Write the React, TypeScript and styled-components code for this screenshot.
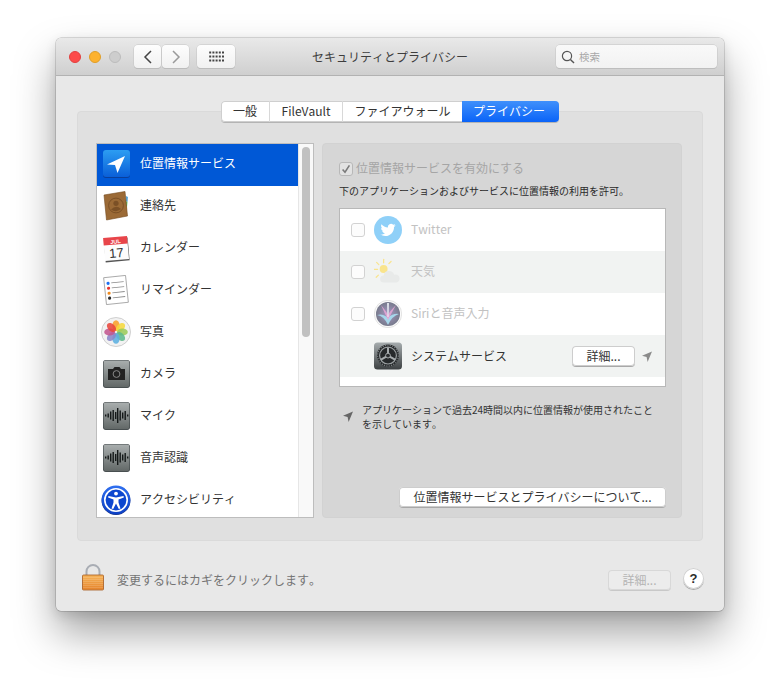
import React from "react";
import styled, { createGlobalStyle } from "styled-components";

const Global = createGlobalStyle`
  html, body { margin: 0; padding: 0; background: #fff; }
  body { width: 780px; height: 685px; overflow: hidden; font-family: "Noto Sans CJK JP", "Liberation Sans", sans-serif; font-size: 12px; color: #2e2e2e; font-kerning: none; }
  #root { padding: 38px 56px 0; }
`;

const Window = styled.div`
  width: 668px; height: 573px; box-sizing: border-box; display: flex; flex-direction: column;
  background: #e8e8e8; border-radius: 5px;
  box-shadow: 0 0 0 .5px rgba(0,0,0,.25), 0 22px 42px rgba(0,0,0,.36), 0 4px 12px rgba(0,0,0,.12);
`;
const TitleBar = styled.header`
  position: relative; height: 38px; box-sizing: border-box; flex: none;
  display: flex; align-items: center; padding: 0 7px 0 13px;
  background: linear-gradient(#e9e9e9, #cfcfcf); border-bottom: 1px solid #b2b2b2; border-radius: 5px 5px 0 0;
`;
const Light = styled.span<{ $c: string; $b: string }>`
  width: 12px; height: 12px; border-radius: 50%; margin-right: 8px; flex: none; box-sizing: border-box;
  background: ${p => p.$c}; border: .5px solid ${p => p.$b};
`;
const ToolBtn = styled.button<{ $w: number; $dim?: boolean }>`
  width: ${p => p.$w}px; height: 23px; padding: 0; flex: none; display: flex; align-items: center; justify-content: center;
  background: linear-gradient(#fdfdfd, #f1f1f1); border: none; border-radius: 4px;
  box-shadow: 0 0 0 .5px #c4c4c4, 0 1px 0 #b4b4b4; color: ${p => (p.$dim ? "#9a9a9a" : "#444")};
`;
const NavGroup = styled.div`display: flex; gap: 1px; margin: 0 8px 0 5px;`;
const Title = styled.div`
  position: absolute; left: 0; right: 0; top: 9px; text-align: center; font-size: 12px; line-height: 20px; color: #3d3d3d; pointer-events: none;
`;
const Search = styled.div`
  margin-left: auto; width: 161px; height: 23px; box-sizing: border-box; display: flex; align-items: center; gap: 4px; padding-left: 5px;
  background: linear-gradient(#f9f9f9, #f2f2f2); border-radius: 4px; box-shadow: 0 0 0 .5px #c4c4c4, 0 1px 0 #b8b8b8;
  font-size: 10.5px; color: #a8a8a8;
`;
const Body = styled.main`flex: 1; display: flex; flex-direction: column; padding: 25px 21px 0; min-height: 0;`;
const Tabs = styled.nav`
  position: relative; z-index: 1; align-self: center; display: flex; height: 21px; margin-bottom: -11px;
  background: #fff; border-radius: 4px; box-shadow: inset 0 0 0 1px #cfcfcf, 0 1px 0 #b4b4b4;
`;
const Tab = styled.div<{ $w: number; $on?: boolean; $sep?: boolean }>`
  width: ${p => p.$w}px; box-sizing: border-box; text-align: center; line-height: 20px; font-size: 12px;
  color: ${p => (p.$on ? "#fff" : "#333")};
  background: ${p => (p.$on ? "linear-gradient(#3f90fb, #0a63f8)" : "transparent")};
  border-radius: ${p => (p.$on ? "0 4px 4px 0" : "0")};
  border-right: ${p => (p.$sep ? "1px solid #d8d8d8" : "none")};
  padding-right: ${p => (p.$on ? "3px" : "0")};
`;
const Panel = styled.section`
  height: 430px; box-sizing: border-box; flex: none; display: flex; gap: 9px; padding: 31px 20px 22px 18px;
  background: #e0e0e0; border: 1px solid #dadada; border-radius: 4px;
`;
const ListBox = styled.div`
  width: 218px; flex: none; box-sizing: border-box; display: flex; background: #fff; border: 1px solid #bdbdbd; overflow: hidden;
`;
const List = styled.ul`flex: 1; margin: 0; padding: 0; list-style: none; min-width: 0;`;
const ListRow = styled.li<{ $on?: boolean }>`
  height: 42px; display: flex; align-items: center; gap: 9px; padding-left: 4px;
  font-size: 12px; line-height: 16px; padding-bottom: 3px; box-sizing: border-box;
  background: ${p => (p.$on ? "#0058d6" : "transparent")}; color: ${p => (p.$on ? "#fff" : "#333")};
`;
const RowLabel = styled.span`padding-bottom: 2px;`;
const IconSlot = styled.span`width: 30px; height: 30px; flex: none; display: block; svg { display: block; }`;
const Track = styled.div`
  width: 15px; flex: none; box-sizing: border-box; padding: 3px 3px 0 3px; background: #f9f9f9; border-left: 1px solid #e6e6e6;
`;
const Thumb = styled.div`width: 8px; height: 190px; border-radius: 4px; background: #c1c1c1;`;
const Right = styled.div`
  width: 360px; flex: none; box-sizing: border-box; display: flex; flex-direction: column; padding: 17px 15px 10px 16px;
  background: #d6d6d6; border: 1px solid #d2d2d2; border-radius: 4px; margin-left: -1px;
`;
const EnableRow = styled.label`
  display: flex; align-items: center; gap: 3px; height: 16px; font-size: 12px; line-height: 16px; color: #a5a5a5;
`;
const EnableText = styled.span`padding-bottom: 2px;`;
const Box = styled.span<{ $dim?: boolean }>`
  width: 14px; height: 14px; flex: none; box-sizing: border-box; border-radius: 3px; display: flex; align-items: center; justify-content: center;
  border: 1px solid ${p => (p.$dim ? "#b8b8b8" : "#d2d2d2")}; background: ${p => (p.$dim ? "#e2e2e2" : "#fcfcfc")};
`;
const Desc = styled.p`margin: 7px 0 10px; font-size: 10px; line-height: 14px; color: #2a2a2a;`;
const Apps = styled.div`
  height: 179px; box-sizing: border-box; background: #fff; border: 1px solid #b8b8b8; flex: none;
`;
const AppRow = styled.div<{ $alt?: boolean; $dim?: boolean }>`
  height: 42px; display: flex; align-items: center; padding: 0 13px 0 11px; box-sizing: border-box;
  background: ${p => (p.$alt ? "#f1f3f2" : "#fff")}; color: ${p => (p.$dim ? "#c2c2c2" : "#333")}; font-size: 12px; line-height: 16px;
`;
const AppIcon = styled.span`width: 28px; height: 28px; margin: 0 9px 0 9px; flex: none; display: block; svg { display: block; }`;
const AppSpacer = styled.span`width: 14px; flex: none;`;
const AppName = styled.span<{ $lift?: boolean }>`flex: 1; padding-bottom: ${p => (p.$lift ? "2px" : "0")};`;
const PlainBtn = styled.button<{ $w: number }>`
  width: ${p => p.$w}px; height: 20px; flex: none; padding: 0 0 1px; border: none; border-radius: 4px; background: #fff;
  box-shadow: inset 0 0 0 1px #cdcdcd, 0 1px 0 #a8a8a8; font: inherit; font-size: 12px; line-height: 16px; color: #333; text-align: center;
`;
const Arrow = styled.span`width: 10px; height: 11px; margin-left: 7px; flex: none; svg { display: block; }`;
const Note = styled.div`
  display: flex; align-items: center; gap: 9px; margin: 16px 0 0 4px; font-size: 10px; line-height: 14px; color: #333;
  width: 317px;
`;
const NoteIcon = styled.span`width: 10px; height: 12px; flex: none; svg { display: block; }`;
const AboutRow = styled.div`margin-top: auto; display: flex; justify-content: flex-end;`;
const Footer = styled.footer`
  flex: 1; display: flex; align-items: center; padding: 8px 0 0 4px;
`;
const Lock = styled.span`width: 24px; height: 28px; flex: none; margin-right: 12px; margin-top: -6px; svg { display: block; }`;
const FooterText = styled.span`font-size: 12px; line-height: 16px; color: #747474;`;
const DisabledBtn = styled.button`
  margin-left: auto; width: 63px; height: 20px; padding: 0 0 1px; border-radius: 4px; border: none; background: #ececec;
  box-shadow: inset 0 0 0 1px #d8d8d8, 0 1px 0 #c8c8c8; font: inherit; font-size: 12px; line-height: 16px; color: #b4b4b4;
`;
const Help = styled.span`
  width: 21px; height: 21px; margin: -3px -1px 0 12px; border-radius: 50%; background: #fff; display: flex; align-items: center; justify-content: center;
  box-shadow: inset 0 0 0 1px #d0d0d0, 0 1px 0 #a8a8a8; font-family: "Liberation Sans", sans-serif; font-weight: 700; font-size: 13px; color: #2c2c2c;
`;

const Chevron = ({ left }: { left?: boolean }) => (
  <svg width="10" height="14" viewBox="0 0 10 14" fill="none" stroke="currentColor" strokeWidth="1.5">
    <path d={left ? "M8 1 L2 7 L8 13" : "M2 1 L8 7 L2 13"} />
  </svg>
);
const Grid = () => (
  <svg width="15" height="11" viewBox="0 0 15 11" fill="#444">
    {[0, 1, 2].map(r => [0, 1, 2, 3, 4].map(c => <rect key={`${r}${c}`} x={c * 3.2 + .2} y={r * 4 + .5} width="2" height="2" />))}
  </svg>
);
const Magnifier = () => (
  <svg width="14" height="14" viewBox="0 0 14 14" fill="none" stroke="#555" strokeWidth="1.2">
    <circle cx="6" cy="6" r="4.6" /><path d="M9.4 9.4 L13 13" strokeWidth="1.4" />
  </svg>
);
const LocArrow = ({ c = "#777" }: { c?: string }) => (
  <svg width="10" height="11" viewBox="0 0 10 11"><path d="M10 0.5 L0 4.8 L4.6 6 L5.6 11 Z" fill={c} /></svg>
);

const LocationIcon = () => (
  <svg width="30" height="30" viewBox="0 0 30 30">
    <defs><linearGradient id="lg" x1="0" y1="0" x2="0" y2="1"><stop offset="0" stopColor="#2c9df2" /><stop offset="1" stopColor="#0a5fd8" /></linearGradient></defs>
    <rect x="2" y="2" width="27" height="27" rx="3" fill="#0a3f9a" />
    <rect x="2" y="1" width="27" height="27" rx="3" fill="url(#lg)" />
    <path d="M24 7 L6 15.5 L14 16 L16.5 24 Z" fill="#fff" />
  </svg>
);
const ContactsIcon = () => (
  <svg width="30" height="30" viewBox="0 0 30 30">
    <path d="M25 5 l2 1 l-.5 5 l-2 -1z" fill="#5aa6d8" /><path d="M24.5 10 l2 1 l-.5 5 l-2 -1z" fill="#5fbf5f" /><path d="M24 15 l2 1 l-.6 5 l-2 -1z" fill="#e8b43a" />
    <path d="M3 4 L24 0.5 L26.5 25 L5.5 29 Z" fill="#9b6a36" stroke="#73491f" strokeWidth=".6" />
    <circle cx="15" cy="14.5" r="7.4" fill="none" stroke="#7b5026" strokeWidth="1" />
    <circle cx="15" cy="12.3" r="2.6" fill="#7b5026" /><path d="M10 18.5 q5 -5 10 -.5 q-5 4 -10 .5z" fill="#7b5026" />
  </svg>
);
const CalendarIcon = () => (
  <svg width="30" height="30" viewBox="0 0 30 30">
    <g transform="rotate(-5 15 15)">
      <rect x="3.5" y="5.5" width="24" height="23" fill="#555" />
      <rect x="3" y="4" width="24" height="23" fill="#fdfdfd" />
      <rect x="3" y="4" width="24" height="7.5" fill="#e8454a" />
      <text x="15" y="10.5" fontSize="5.5" fontWeight="700" textAnchor="middle" fill="#fff" fontFamily="Liberation Sans">JUL</text>
      <text x="15" y="24.5" fontSize="13" textAnchor="middle" fill="#333" fontFamily="Liberation Sans">17</text>
    </g>
  </svg>
);
const RemindersIcon = () => (
  <svg width="30" height="30" viewBox="0 0 30 30">
    <g transform="rotate(-6 15 15)">
      <rect x="4" y="1.5" width="22" height="27" fill="#fff" stroke="#8a8a8a" strokeWidth=".7" />
      {[7, 12, 17, 22].map(y => <rect key={y} x="11" y={y} width="12.5" height=".9" fill="#8a8a8a" />)}
      <circle cx="7.8" cy="7.5" r="1.6" fill="#1f6ff2" /><circle cx="7.8" cy="12.5" r="1.6" fill="#e8332e" />
      <circle cx="7.8" cy="17.5" r="1.6" fill="#ef8a1e" /><circle cx="7.8" cy="22.5" r="1.6" fill="#2b2b2b" />
    </g>
  </svg>
);
const PhotosIcon = () => {
  const cols = ["#f9a12b", "#f6d83c", "#9ccb5a", "#5fb98c", "#5cafe0", "#8a86c9", "#c2568f", "#e8473c"];
  return (
    <svg width="30" height="30" viewBox="0 0 30 30">
      <circle cx="15" cy="15" r="14.5" fill="#f2f2f2" stroke="#c4c4c4" strokeWidth=".8" />
      {cols.map((c, i) => (
        <ellipse key={c} cx="15" cy="8.6" rx="3.6" ry="5.4" fill={c} fillOpacity=".88" transform={`rotate(${i * 45} 15 15)`} />
      ))}
    </svg>
  );
};
const GreyTile = ({ children }: { children: React.ReactNode }) => (
  <svg width="30" height="30" viewBox="0 0 30 30">
    <defs><linearGradient id="gt" x1="0" y1="0" x2="0" y2="1"><stop offset="0" stopColor="#a9aeae" /><stop offset="1" stopColor="#626867" /></linearGradient></defs>
    <rect x="2" y="1" width="27" height="28" rx="3" fill="#3f4648" />
    <rect x="2.6" y="1.6" width="25.8" height="26.6" rx="2.4" fill="url(#gt)" />
    {children}
  </svg>
);
const CameraIcon = () => (
  <GreyTile>
    <path d="M7 10 h5 l1.5 -2 h5 l1.5 2 h4 v11 h-17 z" fill="#222" />
    <circle cx="15.5" cy="15" r="3.4" fill="none" stroke="#888" strokeWidth="1" />
  </GreyTile>
);
const MicIcon = () => (
  <GreyTile>
    {[[4, 1], [6.5, 2], [9, 4], [11.5, 5.5], [14, 3.5], [16, 7.5], [18.5, 5], [21, 3], [23.5, 4.5], [26, 1]].map(([x, h]) => (
      <rect key={x} x={x} y={14.5 - h} width="1.4" height={h * 2} fill="#151919" />
    ))}
  </GreyTile>
);
const AccessIcon = () => (
  <svg width="30" height="30" viewBox="0 0 30 30">
    <defs><linearGradient id="ag" x1="0" y1="0" x2="0" y2="1"><stop offset="0" stopColor="#2f6ff0" /><stop offset="1" stopColor="#0b3fc4" /></linearGradient></defs>
    <circle cx="15" cy="15.6" r="14.4" fill="#1a2f7a" />
    <circle cx="15" cy="15" r="14.4" fill="url(#ag)" />
    <circle cx="15" cy="15" r="11.2" fill="#0d47cf" stroke="#fff" strokeWidth="1.6" />
    <circle cx="15" cy="8.6" r="1.9" fill="#fff" />
    <path d="M7.5 11 L15 12.6 L22.5 11 L22.9 12.6 L17.5 14.4 L17.5 17.5 L19.5 23.5 L17.8 24 L15 18.5 L12.2 24 L10.5 23.5 L12.5 17.5 L12.5 14.4 L7.1 12.6 Z" fill="#fff" />
  </svg>
);
const TwitterIcon = () => (
  <svg width="28" height="28" viewBox="0 0 28 28">
    <circle cx="14" cy="14" r="14" fill="#8fd0f8" />
    <path d="M21.6 9.2c-.6.3-1.2.4-1.8.5.7-.4 1.1-1 1.4-1.7-.6.4-1.3.6-2 .8a3.1 3.1 0 0 0-5.3 2.8c-2.6-.1-4.9-1.4-6.4-3.3-.8 1.4-.4 3.2.9 4.1-.5 0-1-.2-1.4-.4 0 1.5 1.1 2.8 2.5 3.1-.5.1-.9.1-1.4 0 .4 1.2 1.5 2.1 2.9 2.2-1.3 1-3 1.5-4.6 1.3 1.4.9 3 1.4 4.8 1.4 5.8 0 9-4.8 8.8-9.1.6-.4 1.2-1 1.6-1.7z" fill="#fff" />
  </svg>
);
const WeatherIcon = () => (
  <svg width="28" height="28" viewBox="0 0 32 32">
    <circle cx="11" cy="12.5" r="4.5" fill="#f9e48c" />
    <g stroke="#f9e48c" strokeWidth="1.4" strokeLinecap="round">
      <path d="M11 1.5 v4" /><path d="M3 5 l2.5 2.5" /><path d="M0 13 h4" /><path d="M2.5 22 l2.5 -2.5" /><path d="M19.5 4 l-2.5 2.5" />
    </g>
    <path d="M11 28 a4 4 0 0 1 0 -8 a6 6 0 0 1 6 -5 a6 6 0 0 1 6 4 a4.6 4.6 0 0 1 3 9 z" fill="#e8eae9" />
  </svg>
);
const SiriIcon = () => (
  <svg width="28" height="28" viewBox="0 0 28 28">
    <defs><radialGradient id="sg"><stop offset="0" stopColor="#a79ac4" /><stop offset="1" stopColor="#777a8c" /></radialGradient></defs>
    <circle cx="14" cy="14" r="13.7" fill="#fafafa" stroke="#d2d2d2" strokeWidth=".6" />
    <circle cx="14" cy="14" r="12" fill="url(#sg)" />
    <path d="M3 15 Q9 13 14 18 Q19 13 25 14 Q18 16 14 25 Q10 16 3 15z" fill="#a9dff2" fillOpacity=".9" />
    <path d="M7 5 Q12 11 14 15 Q16 11 22 5 Q17 14 14 20 Q11 14 7 5z" fill="#e8a6d6" fillOpacity=".85" />
    <path d="M13 3 h2 l-.4 14 h-1.2z" fill="#f2f7fb" fillOpacity=".8" />
  </svg>
);
const SystemIcon = () => (
  <svg width="28" height="28" viewBox="0 0 28 28">
    <defs><linearGradient id="sy" x1="0" y1="0" x2="0" y2="1"><stop offset="0" stopColor="#a6acae" /><stop offset="1" stopColor="#3c4042" /></linearGradient></defs>
    <rect x="0" y=".5" width="28" height="27" rx="3.5" fill="url(#sy)" />
    <circle cx="14" cy="13.6" r="11" fill="#26292b" />
    <circle cx="14" cy="13.6" r="10.4" fill="none" stroke="#777c7e" strokeWidth="1.2" strokeDasharray="1.2 1.2" />
    <circle cx="14" cy="13.6" r="8.4" fill="none" stroke="#9a9fa1" strokeWidth="1.2" />
    <path d="M14 13.6 L14 5.6 M14 13.6 L21 17.6 M14 13.6 L7 17.6" stroke="#a6abad" strokeWidth="2" />
    <circle cx="14" cy="13.6" r="2.4" fill="#2b2e30" stroke="#a6abad" strokeWidth="1" />
  </svg>
);
const LockIcon = () => (
  <svg width="24" height="28" viewBox="0 0 24 28">
    <defs>
      <linearGradient id="lk" x1="0" y1="0" x2="0" y2="1"><stop offset="0" stopColor="#f6b45a" /><stop offset="1" stopColor="#e5832a" /></linearGradient>
      <pattern id="st" width="4" height="2" patternUnits="userSpaceOnUse"><rect width="4" height="1" fill="#fff" fillOpacity=".14" /></pattern>
    </defs>
    <path d="M5.5 13 V8.5 a6.5 6.5 0 0 1 13 0 V13" fill="none" stroke="#a9adb4" strokeWidth="2" />
    <rect x="1.5" y="12" width="21" height="15" rx="1" fill="url(#lk)" stroke="#a65a20" strokeWidth=".8" />
    <rect x="2" y="13" width="20" height="13.5" fill="url(#st)" />
  </svg>
);
const Check = ({ c = "#7a7a7a" }: { c?: string }) => (
  <svg width="10" height="10" viewBox="0 0 10 10" fill="none" stroke={c} strokeWidth="1.6"><path d="M1.6 5.4 L4 8.2 L8.4 1.4" /></svg>
);

const items: [string, React.ReactNode][] = [
  ["位置情報サービス", <LocationIcon />],
  ["連絡先", <ContactsIcon />],
  ["カレンダー", <CalendarIcon />],
  ["リマインダー", <RemindersIcon />],
  ["写真", <PhotosIcon />],
  ["カメラ", <CameraIcon />],
  ["マイク", <MicIcon />],
  ["音声認識", <MicIcon />],
  ["アクセシビリティ", <AccessIcon />],
];

export default function App() {
  return (
    <>
      <Global />
      <Window>
        <TitleBar>
          <Light $c="#fc4b4a" $b="#e2403f" />
          <Light $c="#fdb22f" $b="#e09e28" />
          <Light $c="#cdcdcd" $b="#bcbcbc" />
          <NavGroup>
            <ToolBtn $w={27}><Chevron left /></ToolBtn>
            <ToolBtn $w={27} $dim><Chevron /></ToolBtn>
          </NavGroup>
          <ToolBtn $w={38}><Grid /></ToolBtn>
          <Title>セキュリティとプライバシー</Title>
          <Search><Magnifier /><span>検索</span></Search>
        </TitleBar>
        <Body>
          <Tabs>
            <Tab $w={49} $sep>一般</Tab>
            <Tab $w={73} $sep>FileVault</Tab>
            <Tab $w={119}>ファイアウォール</Tab>
            <Tab $w={97} $on>プライバシー</Tab>
          </Tabs>
          <Panel>
            <ListBox>
              <List>
                {items.map(([label, icon], i) => (
                  <ListRow key={label} $on={i === 0}>
                    <IconSlot>{icon}</IconSlot>
                    <RowLabel>{label}</RowLabel>
                  </ListRow>
                ))}
              </List>
              <Track><Thumb /></Track>
            </ListBox>
            <Right>
              <EnableRow><Box $dim><Check /></Box><EnableText>位置情報サービスを有効にする</EnableText></EnableRow>
              <Desc>下のアプリケーションおよびサービスに位置情報の利用を許可。</Desc>
              <Apps>
                <AppRow $dim><Box /><AppIcon><TwitterIcon /></AppIcon><AppName $lift>Twitter</AppName></AppRow>
                <AppRow $dim $alt><Box /><AppIcon><WeatherIcon /></AppIcon><AppName $lift>天気</AppName></AppRow>
                <AppRow $dim><Box /><AppIcon><SiriIcon /></AppIcon><AppName $lift>Siriと音声入力</AppName></AppRow>
                <AppRow $alt>
                  <AppSpacer /><AppIcon><SystemIcon /></AppIcon><AppName>システムサービス</AppName>
                  <PlainBtn $w={63}>詳細...</PlainBtn>
                  <Arrow><LocArrow c="#8a8a8a" /></Arrow>
                </AppRow>
              </Apps>
              <Note>
                <NoteIcon><LocArrow c="#666" /></NoteIcon>
                <span>アプリケーションで過去24時間以内に位置情報が使用されたことを示しています。</span>
              </Note>
              <AboutRow><PlainBtn $w={267}>位置情報サービスとプライバシーについて...</PlainBtn></AboutRow>
            </Right>
          </Panel>
          <Footer>
            <Lock><LockIcon /></Lock>
            <FooterText>変更するにはカギをクリックします。</FooterText>
            <DisabledBtn>詳細...</DisabledBtn>
            <Help>?</Help>
          </Footer>
        </Body>
      </Window>
    </>
  );
}
